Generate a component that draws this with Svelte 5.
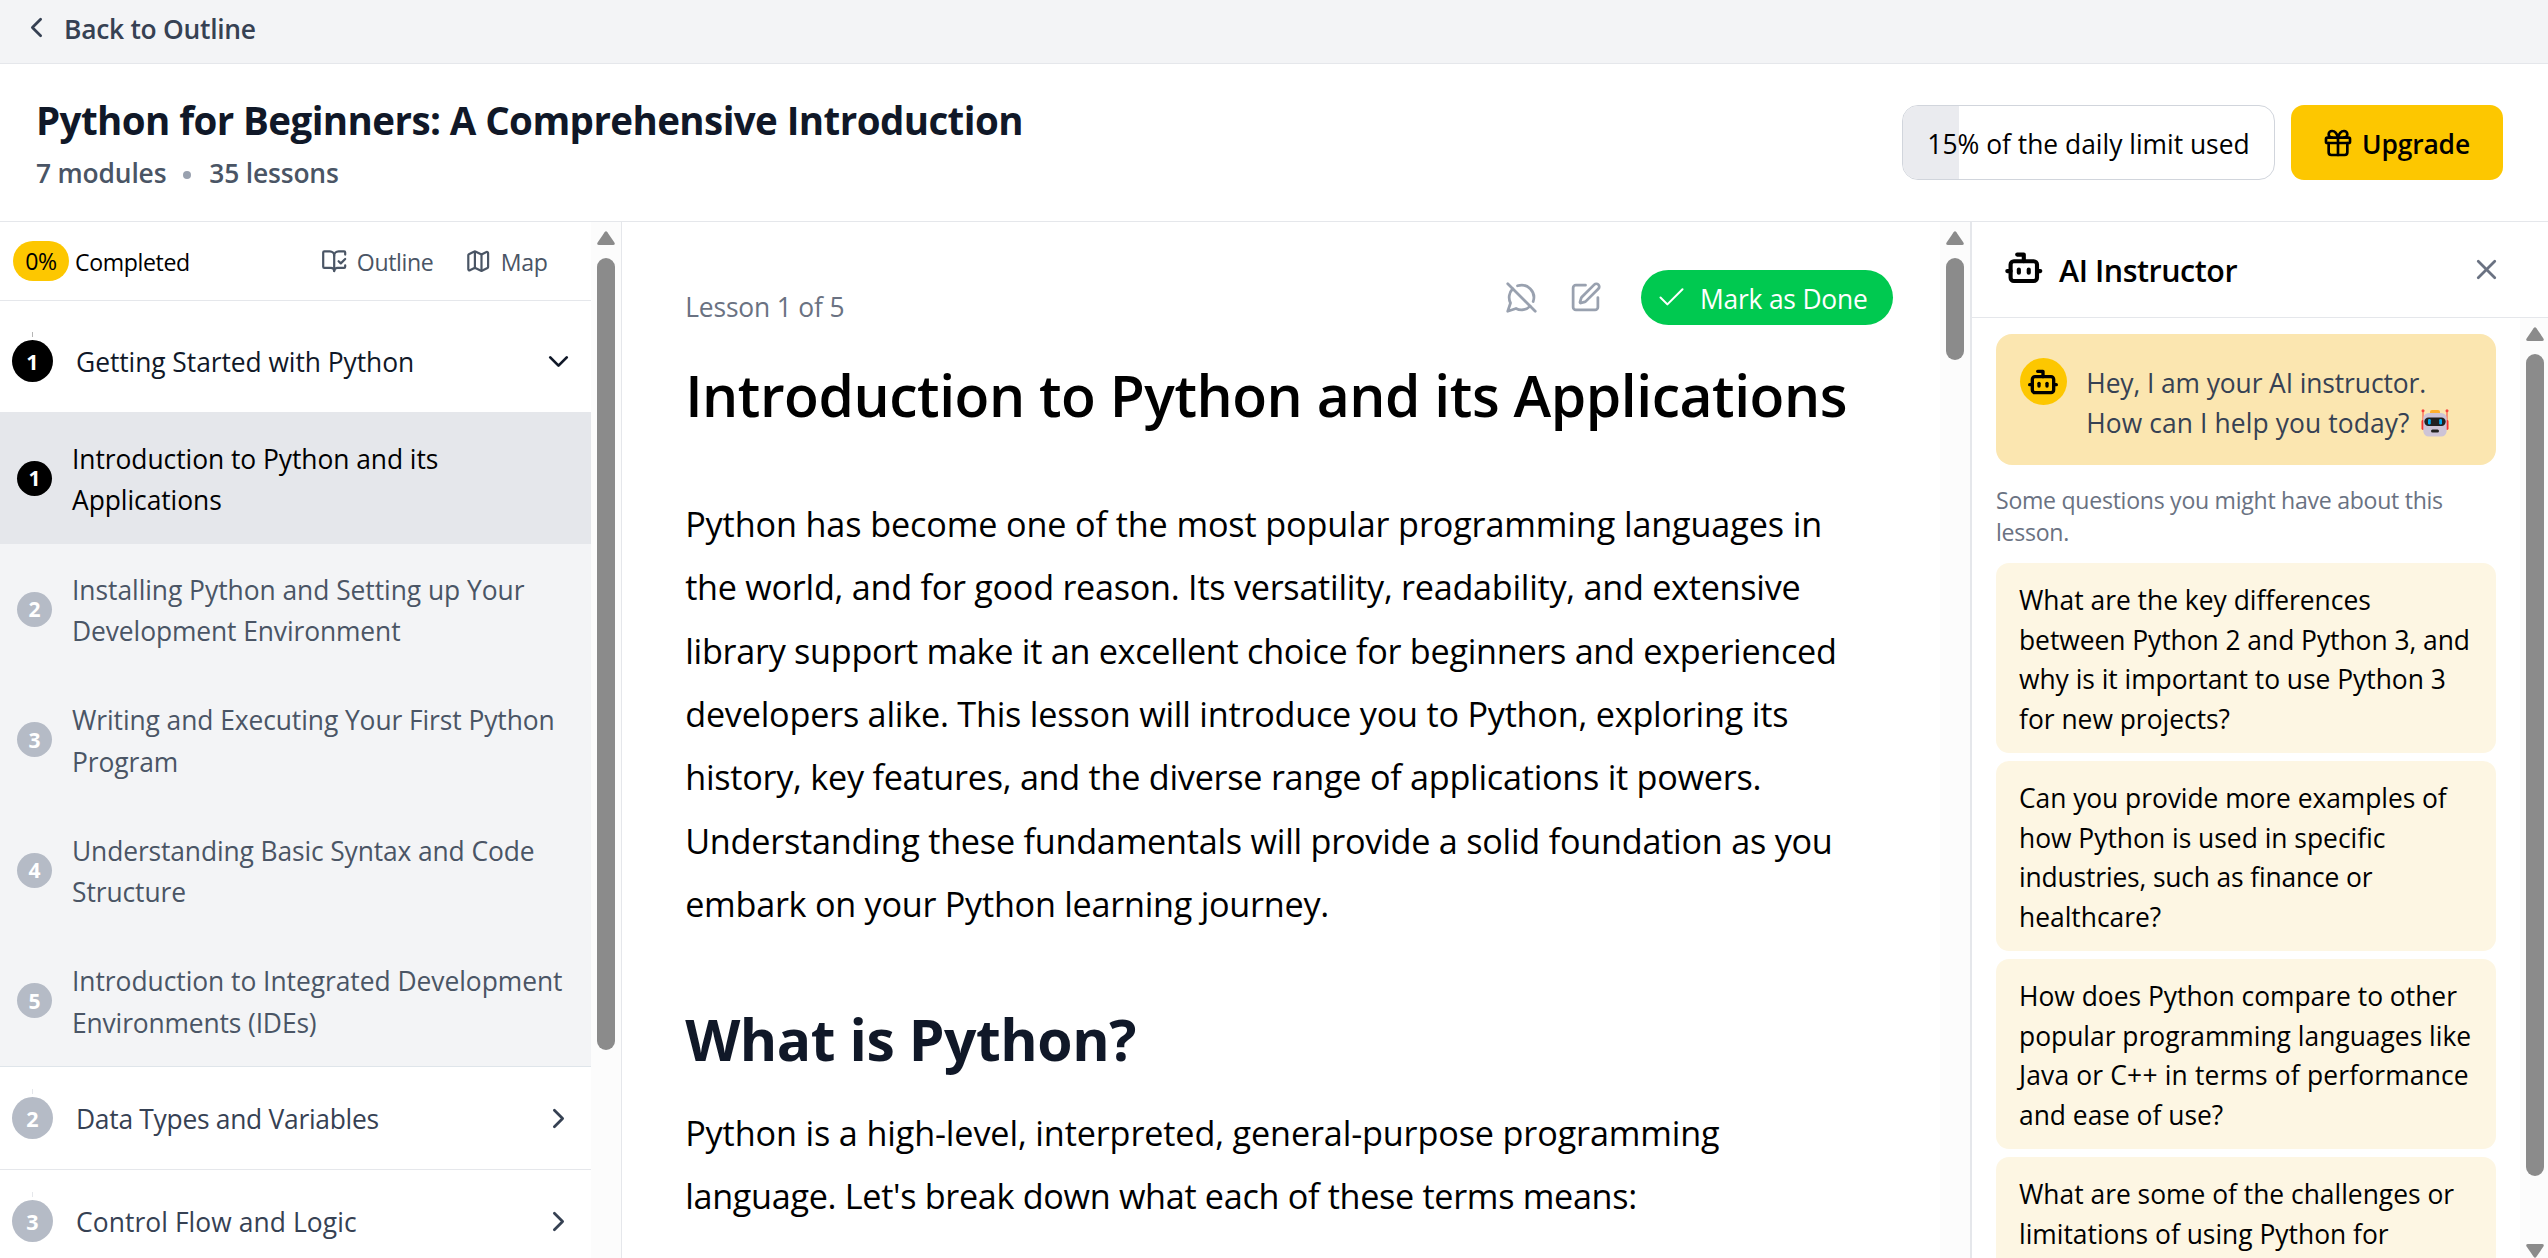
<script lang="ts">
  type Line = [text: string, spacing: number];

  const lessons: Line[][] = [
    [['Introduction to Python and its', -0.05], ['Applications', -0.05]],
    [['Installing Python and Setting up Your', -0.04], ['Development Environment', -0.1]],
    [['Writing and Executing Your First Python', -0.08], ['Program', -0.08]],
    [['Understanding Basic Syntax and Code', -0.12], ['Structure', -0.08]],
    [['Introduction to Integrated Development', -0.04], ['Environments (IDEs)', -0.14]]
  ];

  const intro: Line[] = [
    ['Python has become one of the most popular programming languages in', -0.13],
    ['the world, and for good reason. Its versatility, readability, and extensive', -0.27],
    ['library support make it an excellent choice for beginners and experienced', -0.28],
    ['developers alike. This lesson will introduce you to Python, exploring its', -0.22],
    ['history, key features, and the diverse range of applications it powers.', -0.26],
    ['Understanding these fundamentals will provide a solid foundation as you', -0.24],
    ['embark on your Python learning journey.', -0.26]
  ];

  const what: Line[] = [
    ['Python is a high-level, interpreted, general-purpose programming', -0.14],
    ["language. Let's break down what each of these terms means:", -0.32]
  ];

  const questions: Line[][] = [
    [['What are the key differences', 0], ['between Python 2 and Python 3, and', -0.04], ['why is it important to use Python 3', -0.02], ['for new projects?', 0]],
    [['Can you provide more examples of', -0.05], ['how Python is used in specific', 0], ['industries, such as finance or', -0.15], ['healthcare?', 0]],
    [['How does Python compare to other', 0], ['popular programming languages like', 0], ['Java or C++ in terms of performance', 0.17], ['and ease of use?', 0]],
    [['What are some of the challenges or', 0], ['limitations of using Python for', 0]]
  ];

  const usage = 15;

  const icons = {
    left: ['m15 18-6-6 6-6'],
    right: ['m9 18 6-6-6-6'],
    down: ['m6 9 6 6 6-6'],
    close: ['M18 6 6 18', 'm6 6 12 12'],
    check: ['M20 6 9 17l-5-5'],
    gift: [
      'M4 8h16a1 1 0 0 1 1 1v2a1 1 0 0 1-1 1H4a1 1 0 0 1-1-1V9a1 1 0 0 1 1-1z',
      'M12 8v13',
      'M19 12v7a2 2 0 0 1-2 2H7a2 2 0 0 1-2-2v-7',
      'M7.5 8a2.5 2.5 0 0 1 0-5A4.8 8 0 0 1 12 8a4.8 8 0 0 1 4.5-5 2.5 2.5 0 0 1 0 5'
    ],
    bot: [
      'M12 8V4H8',
      'M6 8h12a2 2 0 0 1 2 2v8a2 2 0 0 1-2 2H6a2 2 0 0 1-2-2v-8a2 2 0 0 1 2-2z',
      'M2 14h2',
      'M20 14h2',
      'M15 13v2',
      'M9 13v2'
    ],
    book: [
      'M12 21V7',
      'm16 12 2 2 4-4',
      'M22 6V4a1 1 0 0 0-1-1h-5a4 4 0 0 0-4 4 4 4 0 0 0-4-4H3a1 1 0 0 0-1 1v13a1 1 0 0 0 1 1h6a3 3 0 0 1 3 3 3 3 0 0 1 3-3h6a1 1 0 0 0 1-1v-1.3'
    ],
    map: [
      'M14.106 5.553a2 2 0 0 0 1.788 0l3.659-1.83A1 1 0 0 1 21 4.619v12.764a1 1 0 0 1-.553.894l-4.553 2.277a2 2 0 0 1-1.788 0l-4.212-2.106a2 2 0 0 0-1.788 0l-3.659 1.83A1 1 0 0 1 3 19.381V6.618a1 1 0 0 1 .553-.894l4.553-2.277a2 2 0 0 1 1.788 0z',
      'M15 5.764v15',
      'M9 3.236v15'
    ],
    mute: [
      'M20.5 14.9A9 9 0 0 0 9.1 3.5',
      'm2 2 20 20',
      'M5.6 5.6C3 8.3 2.2 12.5 4 16l-2 6 6-2c3.4 1.8 7.6 1.1 10.3-1.7'
    ],
    edit: [
      'M12 3H5a2 2 0 0 0-2 2v14a2 2 0 0 0 2 2h14a2 2 0 0 0 2-2v-7',
      'M18.375 2.625a1 1 0 0 1 3 3l-9.013 9.014a2 2 0 0 1-.853.505l-2.873.84a.5.5 0 0 1-.62-.62l.84-2.873a2 2 0 0 1 .506-.852z'
    ]
  };
</script>

{#snippet icon(name: keyof typeof icons, cls: string)}
  <svg class="icon {cls}" viewBox="0 0 24 24" aria-hidden="true">
    {#each icons[name] as d}<path {d} />{/each}
  </svg>
{/snippet}

{#snippet lines(items: Line[])}
  {#each items as [text, spacing]}
    <span class="line" style:letter-spacing="{spacing}px">{text}</span>
  {/each}
{/snippet}

{#snippet scrollbar(cls: string, bottom: boolean)}
  <div class="scrollbar {cls}">
    <svg class="arrow" viewBox="0 0 18 14"><path d="M7.6 1.2Q9-.8 10.4 1.2L17.4 11.4Q18.6 14 16 14H2Q-.6 14 .6 11.4Z" /></svg>
    <div class="thumb"></div>
    {#if bottom}
      <svg class="arrow last" viewBox="0 0 18 14"><path d="M7.6 12.8Q9 14.8 10.4 12.8L17.4 2.6Q18.6 0 16 0H2Q-.6 0 .6 2.6Z" /></svg>
    {/if}
  </div>
{/snippet}

{#snippet moduleRow(n: number, title: string, spacing: number, open: boolean)}
  <div class="module" class:open>
    <span class="num">{n}</span>
    <span class="module-title" style:letter-spacing="{spacing}px">{title}</span>
    {@render icon(open ? 'down' : 'right', 'i33')}
  </div>
{/snippet}

<div class="app">
  <nav class="topbar">
    {@render icon('left', 'i33')}
    <span>Back to Outline</span>
  </nav>

  <header class="course">
    <div class="course-info">
      <h1>Python for Beginners: A Comprehensive Introduction</h1>
      <p><span>7 modules</span><i class="dot"></i><span>35 lessons</span></p>
    </div>
    <div class="actions">
      <div class="limit">
        <div class="limit-fill" style:width="{usage}%"></div>
        <span>{usage}% of the daily limit used</span>
      </div>
      <button class="upgrade">{@render icon('gift', 'i32')}<span>Upgrade</span></button>
    </div>
  </header>

  <div class="body">
    <aside class="sidebar">
      <div class="modules">
        <div class="progress">
          <span class="badge">0%</span>
          <span class="completed">Completed</span>
          <span class="view">{@render icon('book', 'i26')}<span>Outline</span></span>
          <span class="view map">{@render icon('map', 'i26')}<span>Map</span></span>
        </div>
        {@render moduleRow(1, 'Getting Started with Python', -0.06, true)}
        <div class="lessons">
          {#each lessons as lesson, i}
            <div class="lesson" class:active={i === 0}>
              <span class="num">{i + 1}</span>
              <span class="lesson-title">{@render lines(lesson)}</span>
            </div>
          {/each}
        </div>
        {@render moduleRow(2, 'Data Types and Variables', -0.28, false)}
        {@render moduleRow(3, 'Control Flow and Logic', 0.08, false)}
      </div>
      {@render scrollbar('sb-side', false)}
    </aside>

    <main>
      <article>
        <div class="lesson-bar">
          <span class="count">Lesson 1 of 5</span>
          {@render icon('mute', 'i33 tool')}
          {@render icon('edit', 'i33 tool')}
          <button class="done">{@render icon('check', 'i33')}<span>Mark as Done</span></button>
        </div>
        <h2 class="title">Introduction to Python and its Applications</h2>
        <p class="first">{@render lines(intro)}</p>
        <h2 class="section">What is Python?</h2>
        <p class="second">{@render lines(what)}</p>
      </article>
      {@render scrollbar('sb-main', false)}
    </main>

    <aside class="chat">
      <div class="chat-head">
        {@render icon('bot', 'i40 bold')}
        <span>AI Instructor</span>
        {@render icon('close', 'i33 close')}
      </div>
      <div class="chat-body">
        <div class="messages">
          <div class="hello">
            <span class="avatar">{@render icon('bot', 'i32 bold')}</span>
            <div class="hello-text">
              <span class="line">Hey, I am your AI instructor.</span>
              <span class="line second-line">How can I help you today?
                <svg class="robot" viewBox="0 0 28 28">
                  <path d="M2 2v10M26 2v10" stroke="#f8413c" stroke-width="1" />
                  <circle cx="2" cy="1.8" r="1.5" fill="#f8413c" />
                  <circle cx="26" cy="1.8" r="1.5" fill="#f8413c" />
                  <rect x="0.5" y="11" width="3" height="10" rx="1.4" fill="#f8312f" />
                  <rect x="24.5" y="11" width="3" height="10" rx="1.4" fill="#f8312f" />
                  <rect x="9" y="1" width="10" height="5" rx="2" fill="#ffb02e" />
                  <rect x="2.3" y="4" width="23.4" height="23.5" rx="5.5" fill="#cdc4d6" />
                  <rect x="3.3" y="8.5" width="21.4" height="8.5" rx="4.2" fill="#212121" />
                  <rect x="7" y="10" width="2.800" height="5.500" rx="1.200" fill="#00a6ed" />
                  <rect x="18.2" y="10" width="2.800" height="5.500" rx="1.200" fill="#00a6ed" />
                  <rect x="10" y="20.500" width="8" height="3" rx="1.500" fill="#212121" />
                </svg>
              </span>
            </div>
          </div>
          <p class="hint"><span class="line">Some questions you might have about this</span><span class="line">lesson.</span></p>
          <div class="questions">
            {#each questions as question}
              <div class="question">{@render lines(question)}</div>
            {/each}
          </div>
        </div>
        {@render scrollbar('sb-chat', true)}
      </div>
    </aside>
  </div>
</div>

<style>
  :global(body) { background: #fff; }

  .app {
    display: flex;
    flex-direction: column;
    width: 100%;
    height: 1258px;
    overflow: hidden;
    font-family: "Open Sans", "Noto Sans", sans-serif;
    font-size: 26.4px;
    color: #000;
  }
  .app :global(*) { box-sizing: border-box; }
  h1, h2, p { margin: 0; }
  button { border: 0; font: inherit; }
  .line { display: block; white-space: nowrap; }

  .icon { flex: none; fill: none; stroke: currentColor; stroke-width: 2; stroke-linecap: round; stroke-linejoin: round; }
  .i26 { width: 26.4px; height: 26.4px; }
  .i32 { width: 32px; height: 32px; }
  .i33 { width: 33px; height: 33px; }
  .i40 { width: 39.6px; height: 39.6px; }
  .bold { stroke-width: 2.5; }

  .topbar {
    display: flex;
    flex: none;
    align-items: center;
    gap: 11px;
    height: 64px;
    padding: 0 0 8px 20px;
    background: #f3f4f6;
    border-bottom: 1px solid #e5e7eb;
    color: #364153;
    font-weight: 600;
    letter-spacing: -0.27px;
  }
  .topbar span { padding-top: 3px; }

  .course {
    display: flex;
    flex: none;
    justify-content: space-between;
    height: 158px;
    padding: 30px 45px 0 36px;
    border-bottom: 1px solid #e5e7eb;
  }
  h1 { font-size: 38.5px; line-height: 52px; font-weight: 700; letter-spacing: -0.58px; color: #101828; }
  .course-info p {
    display: flex;
    align-items: center;
    padding-top: 1px;
    line-height: 53px;
    font-weight: 600;
    letter-spacing: -0.17px;
    color: #4a5565;
  }
  .dot { width: 8px; height: 8px; margin: 3px 18px 0 17px; border-radius: 50%; background: #99a1af; }
  .actions { display: flex; align-items: flex-start; gap: 16px; padding-top: 11px; }
  .limit {
    position: relative;
    display: flex;
    align-items: center;
    justify-content: center;
    width: 373px;
    height: 75px;
    border: 1px solid #d1d5dc;
    border-radius: 16px;
    overflow: hidden;
    letter-spacing: 0;
  }
  .limit-fill { position: absolute; inset: 0 auto 0 0; background: #eaebef; }
  .limit span { position: relative; padding-top: 3px; }
  .upgrade {
    display: flex;
    align-items: center;
    gap: 8px;
    width: 212px;
    height: 75px;
    padding: 0 0 0 31px;
    border-radius: 13px;
    background: #fdc700;
    color: #000;
    font-weight: 600;
    letter-spacing: -0.15px;
  }
  .upgrade span { padding-top: 2px; }

  .body { display: flex; flex: 1; min-height: 0; }

  .scrollbar { display: flex; flex: none; flex-direction: column; align-items: center; width: 30px; padding-top: 9px; background: #fcfcfc; }
  .arrow { flex: none; width: 18px; height: 14px; fill: #8b8b8b; }
  .thumb { width: 18px; margin-top: 13px; border-radius: 9px; background: #8b8b8b; }
  .sb-side .thumb { height: 792px; }
  .sb-main .thumb { height: 102px; }
  .sb-chat { width: 28px; padding-right: 4px; padding-left: 6px; }
  .sb-chat .thumb { height: 822px; }
  .last { margin-top: auto; }

  .sidebar { display: flex; flex: none; width: 622px; border-right: 1px solid #e5e7eb; }
  .modules { width: 591px; overflow: hidden; }
  .progress {
    display: flex;
    align-items: center;
    height: 79px;
    padding-left: 13px;
    border-bottom: 1px solid #e5e7eb;
    font-size: 23.1px;
    letter-spacing: -0.36px;
  }
  .badge { width: 56px; height: 40px; border-radius: 20px; background: #fdc700; line-height: 41px; text-align: center; }
  .completed { flex: 1; padding: 1px 0 0 6px; }
  .view { display: flex; align-items: center; gap: 9.5px; margin-right: 31.5px; color: #4a5565; }
  .map { margin-right: 43.5px; }
  .view span { padding-top: 1px; }

  .num {
    position: relative;
    display: flex;
    flex: none;
    align-items: center;
    justify-content: center;
    border-radius: 50%;
    background: #b5bbc6;
    color: #fff;
    font-size: 21.5px;
    font-weight: 700;
  }
  .module {
    display: flex;
    align-items: center;
    height: 103px;
    padding: 0 16px 0 12px;
    border-bottom: 1px solid #e5e7eb;
    color: #364153;
  }
  .module.open { height: 111px; padding-top: 9px; border: 0; color: #101828; }
  .module .num { width: 41px; height: 42px; }
  .module .num::before { content: ""; position: absolute; top: -8px; left: 20px; width: 1px; height: 5px; background: #e5e7eb; }
  .module.open .num::before { background: #b5b5b5; }
  .module.open .num { background: #000; }
  .module-title { flex: 1; padding: 2px 0 0 23px; }

  .lessons { background: #f3f4f6; border-bottom: 1px solid #dfe5ea; }
  .lesson { display: flex; align-items: center; height: 130.5px; padding-left: 17px; color: #4a5565; }
  .lesson .num { width: 35px; height: 35px; font-size: 21px; }
  .lesson-title { padding: 4px 0 0 20px; line-height: 41.3px; }
  .lesson.active { height: 132px; background: #e5e7eb; color: #000; }
  .lesson.active .num { background: #000; }

  main { display: flex; flex: none; width: 1348px; }
  article { flex: 1; padding: 48px 47px 0 63.2px; overflow: hidden; }
  .lesson-bar { display: flex; align-items: center; height: 55px; }
  .count { flex: 1; padding-top: 18px; letter-spacing: -0.16px; color: #6a7282; }
  .lesson-bar :global(.tool) { margin-right: 30.5px; color: #99a1af; }
  .lesson-bar :global(.tool + .tool) { margin-right: 39.5px; }
  .done {
    display: flex;
    align-items: center;
    gap: 12px;
    width: 252px;
    height: 55px;
    padding: 0 0 0 14px;
    border-radius: 28px;
    background: #00c950;
    color: #fff;
    letter-spacing: -0.2px;
  }
  .done :global(.icon) { stroke-width: 1.5; }
  .done span { padding-top: 2px; }
  .title { margin-top: 35px; font-size: 57px; line-height: 70px; font-weight: 600; letter-spacing: -0.46px; white-space: nowrap; }
  article p { font-size: 34.2px; line-height: 63.4px; }
  .first { margin-top: 61.8px; }
  .section { margin-top: 68.3px; font-size: 57px; line-height: 70px; font-weight: 700; letter-spacing: -0.45px; color: #101828; }
  .second { margin-top: 27px; }

  .chat { display: flex; flex: 1; flex-direction: column; min-width: 0; border-left: 2px solid #e5e7eb; }
  .chat-head {
    display: flex;
    flex: none;
    align-items: center;
    height: 96px;
    padding: 0 45px 4px 32px;
    border-bottom: 1px solid #e5e7eb;
    font-size: 30.4px;
    font-weight: 600;
    letter-spacing: -0.45px;
  }
  .chat-head span { flex: 1; padding: 5px 0 0 15.5px; }
  .chat-head :global(.close) { margin-top: 4px; color: #6a7282; }
  .chat-body { display: flex; flex: 1; min-height: 0; }
  .messages { flex: 1; padding: 16px 24px 0; overflow: hidden; }
  .hello { display: flex; align-items: flex-start; height: 131px; padding: 24px; border-radius: 16px; background: #fbe6b0; }
  .avatar { display: flex; flex: none; align-items: center; justify-content: center; width: 47px; height: 47px; border-radius: 50%; background: #fdc700; }
  .avatar :global(.icon) { margin-right: 2px; }
  .hello-text { padding: 6px 0 0 19.3px; line-height: 39.6px; letter-spacing: -0.1px; color: #364153; }
  .second-line { letter-spacing: 0.1px; }
  .robot { width: 28px; height: 28px; margin-left: 5px; vertical-align: -4px; }
  .hint { margin-top: 19px; font-size: 23.1px; line-height: 32px; letter-spacing: -0.28px; color: #6a7282; }
  .questions { display: flex; flex-direction: column; gap: 8px; margin-top: 15px; }
  .question { flex: none; height: 190px; padding: 18px 0 0 23px; border-radius: 13px; background: #fdf6e3; line-height: 39.6px; }
</style>
